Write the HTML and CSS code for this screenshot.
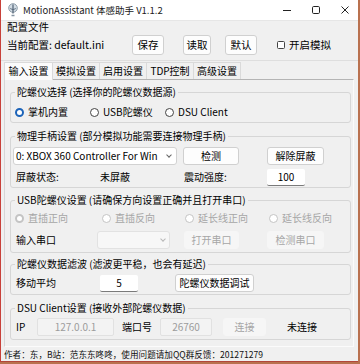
FILE: index.html
```html
<!DOCTYPE html>
<html lang="zh">
  <head>
    <meta charset="UTF-8" />
    <title>MotionAssistant 体感助手</title>
    <link rel="stylesheet" href="styles.css">
  </head>
  <body>
    <div class="window">
      <div class="titlebar">
        <svg class="app-icon" width="10" height="14" viewBox="0 0 10 14">
          <circle cx="5" cy="5" r="4.3" fill="#d3dde5" stroke="#8494a2" stroke-width="0.9"/>
          <path d="M5 1.5 V10.5" stroke="#56687a" stroke-width="1.3"/>
          <path d="M2.2 5.5 Q5 8 7.8 5.5" stroke="#56687a" stroke-width="0.9" fill="none"/>
          <path d="M3.5 12.5 H6.5" stroke="#8494a2" stroke-width="1.5"/>
        </svg>
        <span class="title">MotionAssistant 体感助手 V1.1.2</span>
        <div class="controls">
          <svg width="8" height="8" viewBox="0 0 8 8"><path d="M0 4.5 H8" stroke="#222" stroke-width="1"/></svg>
          <svg width="8" height="8" viewBox="0 0 8 8"><rect x="0.5" y="0.5" width="7" height="7" rx="1.2" fill="none" stroke="#222" stroke-width="1"/></svg>
          <svg width="8" height="8" viewBox="0 0 8 8"><path d="M0.5 0.5 L7.5 7.5 M7.5 0.5 L0.5 7.5" stroke="#222" stroke-width="1"/></svg>
        </div>
      </div>

      <div class="config">
        <div class="config-title">配置文件</div>
        <div class="row">
          <span class="current">当前配置: default.ini</span>
          <button class="btn save">保存</button>
          <button class="btn load">读取</button>
          <button class="btn reset">默认</button>
          <label class="check"><span class="box"></span>开启模拟</label>
        </div>
      </div>

      <div class="tabs">
        <span class="tab active">输入设置</span>
        <span class="tab">模拟设置</span>
        <span class="tab">启用设置</span>
        <span class="tab">TDP控制</span>
        <span class="tab">高级设置</span>
      </div>

      <div class="panel">
        <fieldset class="group g1">
          <legend>陀螺仪选择 (选择你的陀螺仪数据源)</legend>
          <div class="row">
            <label class="radio src1"><span class="dot checked"></span>掌机内置</label>
            <label class="radio src2"><span class="dot"></span>USB陀螺仪</label>
            <label class="radio"><span class="dot"></span>DSU Client</label>
          </div>
        </fieldset>

        <fieldset class="group g2">
          <legend>物理手柄设置 (部分模拟功能需要连接物理手柄)</legend>
          <div class="row">
            <div class="combo pad"><span class="combo-text">0: XBOX 360 Controller For Win</span><span class="chev"></span></div>
            <button class="btn detect">检测</button>
            <button class="btn unblock">解除屏蔽</button>
          </div>
          <div class="row second">
            <span class="cell">屏蔽状态:</span>
            <span class="cell">未屏蔽</span>
            <span class="cell wide">震动强度:</span>
            <span class="field rumble">100</span>
          </div>
        </fieldset>

        <fieldset class="group g3 disabled">
          <legend>USB陀螺仪设置 (请确保方向设置正确并且打开串口)</legend>
          <div class="row">
            <label class="radio dir1"><span class="dot checked"></span>直插正向</label>
            <label class="radio dir2"><span class="dot"></span>直插反向</label>
            <label class="radio dir3"><span class="dot"></span>延长线正向</label>
            <label class="radio"><span class="dot"></span>延长线反向</label>
          </div>
          <div class="row second">
            <span class="cell dark">输入串口</span>
            <div class="combo port"><span class="chev"></span></div>
            <button class="btn off open">打开串口</button>
            <button class="btn off check-port">检测串口</button>
          </div>
        </fieldset>

        <fieldset class="group g4">
          <legend>陀螺仪数据滤波 (滤波更平稳，也会有延迟)</legend>
          <div class="row">
            <span class="cell">移动平均</span>
            <span class="field avg">5</span>
            <button class="btn debug">陀螺仪数据调试</button>
          </div>
        </fieldset>

        <fieldset class="group g5">
          <legend>DSU Client设置 (接收外部陀螺仪数据)</legend>
          <div class="row">
            <span class="ip-label">IP</span>
            <span class="field off ip">127.0.0.1</span>
            <span class="port-label">端口号</span>
            <span class="field off port-num">26760</span>
            <button class="btn off connect">连接</button>
            <span class="conn-state">未连接</span>
          </div>
        </fieldset>
      </div>

      <div class="status">作者：东，B站：范东东咚咚，使用问题请加QQ群反馈：201271279</div>
    </div>
  </body>
</html>
```

FILE: styles.css
```css
* {
  margin: 0;
  padding: 0;
  box-sizing: border-box;
  font-family: "Noto Sans CJK SC", "Noto Sans", sans-serif;
}

body {
  background-color: #b9714f;
  width: 360px;
  height: 364px;
  overflow: hidden;
  font-size: 10px;
  line-height: 14px;
  color: #000;
  white-space: nowrap;
}

.window {
  width: 358px;
  height: 362px;
  background-color: #f0f0f0;
  border-left: 1px solid #c8413a;
  border-bottom: 1px solid #b2463a;
  display: flex;
  flex-direction: column;
}

/* title bar */

.titlebar {
  height: 21px;
  flex-shrink: 0;
  background-color: #fff;
  border-bottom: 1px solid #e6e6e6;
  display: flex;
  align-items: center;
  padding-left: 7px;
}

.app-icon {
  margin-right: 5px;
}

.title {
  font-size: 9.5px;
  color: #1a1a1a;
}

.controls {
  margin-left: auto;
  display: flex;
  gap: 21px;
  padding-right: 9px;
}

/* config row */

.config {
  height: 40px;
  flex-shrink: 0;
  padding-left: 6px;
  border-bottom: 1px solid #dedede;
}

.config-title {
  font-size: 10.5px;
  line-height: 12px;
}

.config .row {
  margin-top: 2px;
  height: 20px;
}

.row {
  display: flex;
  align-items: center;
  height: 18px;
}

.current {
  width: 125px;
  font-size: 10.5px;
}

.btn {
  height: 18px;
  font-size: 10px;
  line-height: 14px;
  background-color: #fdfdfd;
  border: 1px solid #d0d0d0;
  border-radius: 3px;
  color: #000;
  padding: 0;
  flex-shrink: 0;
}

.config .btn {
  height: 20px;
  font-size: 10.5px;
}

.save { width: 32px; }
.load { width: 28px; margin-left: 19px; }
.reset { width: 32px; margin-left: 14px; }

.check {
  display: flex;
  align-items: center;
  gap: 4px;
  margin-left: 20px;
  font-size: 10.5px;
}

.box {
  width: 8px;
  height: 8px;
  border: 1px solid #444;
  border-radius: 1.5px;
  background-color: #fff;
}

/* tabs */

.tabs {
  height: 18px;
  flex-shrink: 0;
  display: flex;
  align-items: flex-end;
  padding-left: 3px;
}

.tab {
  height: 17px;
  line-height: 16px;
  text-align: center;
  background-color: #f0f0f0;
  border: 1px solid #dadada;
  border-bottom: none;
  margin-right: -1px;
  width: 48px;
}

.tab.active {
  background-color: #fbfbfb;
  height: 18px;
  position: relative;
  z-index: 1;
  margin-bottom: -1px;
  width: 49px;
}

/* tab page */

.panel {
  height: 268px;
  flex-shrink: 0;
  width: 350px;
  margin-left: 3px;
  border: 1px solid #fbfbfb;
  border-top-color: #b4b4b4;
  border-left-color: #d6d6d6;
  padding-top: 5px;
}

.group {
  width: 341px;
  margin-left: 5px;
  border: 1px solid #d6d6d6;
  border-radius: 3px;
  padding: 0 2px;
}

.group legend {
  padding: 0 2px;
  margin-left: 2px;
  line-height: 14px;
}

.g1 { height: 38px; }
.g2 { height: 59px; margin-top: 6px; }
.g3 { height: 60px; margin-top: 5px; }
.g4 { height: 38px; margin-top: 4px; }
.g5 { height: 39px; margin-top: 6px; }

.g1 .row { margin-top: 4px; }
.g2 .row { margin-top: 4px; }
.g2 .second { margin-top: 3px; }
.g3 .row { margin-top: 2px; }
.g3 .second { margin-top: 4px; }
.g4 .row,
.g5 .row { margin-top: 3px; }

.radio {
  display: flex;
  align-items: center;
  gap: 4px;
  padding-left: 2px;
}

.src1 { width: 75px; }
.src2 { width: 75px; }

.dir1 { width: 87px; }
.dir2 { width: 83px; }
.dir3 { width: 84px; }

.dot {
  width: 9px;
  height: 9px;
  border-radius: 50%;
  border: 1px solid #444;
  background-color: #fff;
  flex-shrink: 0;
}

.dot.checked {
  border: 2.5px solid #1d64b9;
}

.cell {
  width: 84px;
  padding-left: 3px;
}

.cell.wide { width: 86px; }

.combo {
  position: relative;
  height: 18px;
  background-color: #fff;
  border: 1px solid #d2d2d2;
  border-radius: 3px;
  flex-shrink: 0;
}

.combo-text {
  display: block;
  padding-left: 2px;
  line-height: 16px;
}

.chev {
  position: absolute;
  right: 5px;
  top: 5px;
  width: 4px;
  height: 4px;
  border-right: 1px solid #666;
  border-bottom: 1px solid #666;
  transform: rotate(45deg);
}

.pad { width: 164px; }

.detect { width: 56px; margin-left: 6px; }
.unblock { width: 57px; margin-left: 28px; }

.field {
  background-color: #fff;
  border-bottom: 1px solid #7a7a7a;
  border-radius: 2px;
  text-align: center;
  height: 17px;
  line-height: 16px;
  flex-shrink: 0;
}

.rumble { width: 38px; }

/* disabled group */

.disabled .radio,
.disabled .cell {
  color: #a6a6a6;
}

.disabled .dot {
  border-color: #c4c4c4;
}

.disabled .dot.checked {
  border: 2.5px solid #c4c4c4;
}

.disabled .cell.dark { color: #000; }

.port {
  width: 73px;
  background-color: #f7f7f7;
  border-color: #e2e2e2;
}

.port .chev {
  border-color: #b8b8b8;
  right: 4px;
}

.btn.off {
  background-color: #f6f6f6;
  border-color: #f6f6f6;
  color: #a6a6a6;
}

.open { width: 55px; margin-left: 14px; }
.check-port { width: 57px; margin-left: 28px; }

.avg { width: 38px; margin-left: 3px; }
.debug { width: 79px; margin-left: 37px; }

.ip-label { width: 24px; padding-left: 3px; }

.field.off {
  background-color: #f3f3f3;
  border: 1px solid #e1e1e1;
  color: #9c9c9c;
  height: 18px;
}

.ip { width: 77px; }
.port-label { width: 38px; margin-left: 8px; }
.port-num { width: 52px; }
.connect { width: 43px; margin-left: 11px; }
.conn-state { margin-left: 21px; }

/* status line */

.status {
  height: 14px;
  flex-shrink: 0;
  font-size: 8.6px;
  line-height: 14px;
  padding-left: 3px;
  color: #111;
}
```
